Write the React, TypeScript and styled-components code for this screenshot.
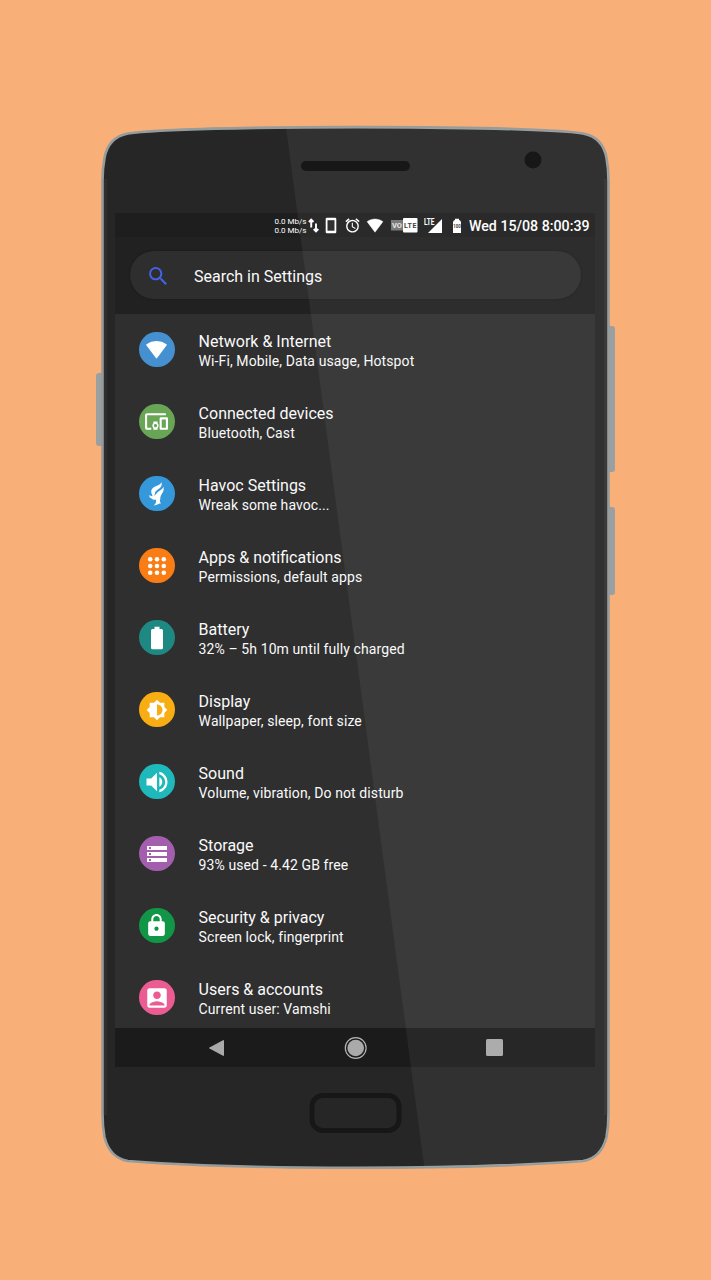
import React from 'react';
import styled, { createGlobalStyle } from 'styled-components';
import {
  MdAccountBox, MdAccessAlarm, MdBrightnessMedium, MdDevicesOther,
  MdLock, MdSearch, MdStorage, MdVolumeUp,
} from 'react-icons/md';

const GlobalStyle = createGlobalStyle`
  * { box-sizing: border-box; }
  body { margin: 0; background: #f8af78; font-family: Roboto, "Liberation Sans", sans-serif; }
`;

const Page = styled.main`
  width: 711px;
  height: 1280px;
  padding: 125px 0 0 96px;
  background: #f8af78;
  overflow: hidden;
`;

const Phone = styled.div`
  position: relative;
  width: 519px;
  height: 1044px;
  padding: 88px 20px 0 19px;
`;

const Shell = styled.svg`
  position: absolute;
  inset: 0;
`;

const Glare = styled.svg`
  position: absolute;
  inset: 0;
  pointer-events: none;
`;

const Screen = styled.div`
  position: relative;
  display: flex;
  flex-direction: column;
  width: 480px;
  height: 854px;
  background: #2f2f2f;
  color: #fafafa;
  overflow: hidden;
`;

const StatusBar = styled.header`
  flex: none;
  display: flex;
  align-items: center;
  height: 24px;
  padding-left: 159.5px;
  background: #1e1e1e;
  color: #fff;
`;

const NetSpeed = styled.div`
  width: 33.5px;
  padding-top: 2px;
  font-size: 8px;
  line-height: 9px;
  white-space: nowrap;
`;

const StatusGlyph = styled.span<{ $w: number; $gap?: number }>`
  display: flex;
  flex: none;
  justify-content: center;
  width: ${(p) => p.$w}px;
  margin-left: ${(p) => p.$gap ?? 0}px;
  padding-top: 1px;
`;

const Clock = styled.span`
  margin-left: 7px;
  padding-top: 2px;
  font-size: 14.2px;
  font-weight: 500;
  white-space: nowrap;
`;

const SearchArea = styled.div`
  flex: none;
  height: 77px;
  padding: 14px 14px 0 15px;
  background: #212121;
`;

const SearchField = styled.div`
  display: flex;
  align-items: center;
  height: 48px;
  padding: 2px 0 0 16px;
  border-radius: 24px;
  background: #2e2e2e;
  box-shadow: 0 0 2px #171717;
  font-size: 16px;
  svg { color: #4262ea; margin-right: 23.5px; }
`;

const List = styled.ul`
  flex: 1;
  min-height: 0;
  margin: 0;
  padding: 0;
  list-style: none;
  overflow: hidden;
`;

const Row = styled.li`
  display: flex;
  align-items: center;
  height: 72px;
  padding: 0 24px 2px;
`;

const Badge = styled.span<{ $color: string }>`
  display: flex;
  align-items: center;
  justify-content: center;
  width: 35.6px;
  height: 35.6px;
  margin: 1px 24px 0 0;
  border-radius: 50%;
  background: ${(p) => p.$color};
  color: #fff;
`;

const RowText = styled.div`
  padding-top: 4px;
`;

const Title = styled.div`
  font-size: 16px;
  line-height: 20px;
`;

const Summary = styled.div`
  margin-top: -1px;
  font-size: 14px;
  line-height: 20px;
  letter-spacing: 0.1px;
`;

const NavBar = styled.nav`
  flex: none;
  display: grid;
  grid-template-columns: repeat(3, 139px);
  justify-content: center;
  align-items: center;
  justify-items: center;
  height: 39px;
  background: #1b1b1b;
`;

const WifiGlyph = ({ width, height, rounded }: { width: number; height: number; rounded?: boolean }) => (
  <svg width={width} height={height} viewBox="0 0 22 19">
    <path
      d="M1 4.6C7 .3 15 .3 21 4.6L11 18Z"
      fill="currentColor"
      stroke="currentColor"
      strokeWidth={rounded ? 1.6 : 0.6}
      strokeLinejoin="round"
    />
  </svg>
);

const FlameGlyph = () => (
  <svg width="36" height="36" viewBox="0 0 36 36" fill="currentColor">
    <path d="M22.800 6C23.600 9.400 22 11.500 19.300 13.300C17 14.900 16 16.200 16 18.200C15.600 19.300 14.800 20.300 13.400 20.600C14.200 18.500 12 17.800 12.400 14.700C13.200 9.300 20.500 10.600 22.800 6Z" />
    <path d="M24.800 10.500C25.500 14.500 24.300 16.500 22.700 18.400C21.200 20.500 21.900 22.800 21 25.500L22.300 27.300C20.500 27.600 18.500 28.800 14.800 29.700C17 28 17.500 26.300 17.200 23.500C15.800 24.500 13.800 23.600 12.600 22.600C11 22.300 10.100 20.800 10.600 18.800C12.200 21.200 15.500 20.500 17.600 17.700C19.800 14.600 23.500 14.200 24.800 10.500Z" />
  </svg>
);

const AppsGlyph = () => (
  <svg width="20" height="20" viewBox="0 0 20 20" fill="currentColor">
    {[3.2, 10, 16.8].map((y) => [3.2, 10, 16.8].map((x) => <circle key={`${x}-${y}`} cx={x} cy={y} r="2.3" />))}
  </svg>
);

const BatteryGlyph = () => (
  <svg width="14" height="24" viewBox="0 0 14 24" fill="currentColor">
    <path d="M4.500 .8H9.500V3H11.500Q13 3 13 4.500V21.700Q13 23.200 11.500 23.200H2.500Q1 23.200 1 21.700V4.500Q1 3 2.500 3H4.500Z" />
  </svg>
);

const items = [
  { title: 'Network & Internet', summary: 'Wi-Fi, Mobile, Data usage, Hotspot', color: '#4590d0', icon: <WifiGlyph width={21} height={19} rounded /> },
  { title: 'Connected devices', summary: 'Bluetooth, Cast', color: '#68a655', icon: <MdDevicesOther size={25} /> },
  { title: 'Havoc Settings', summary: 'Wreak some havoc...', color: '#3498db', icon: <FlameGlyph /> },
  { title: 'Apps & notifications', summary: 'Permissions, default apps', color: '#f97c14', icon: <AppsGlyph /> },
  { title: 'Battery', summary: '32% – 5h 10m until fully charged', color: '#1e8982', icon: <BatteryGlyph /> },
  { title: 'Display', summary: 'Wallpaper, sleep, font size', color: '#f8ad13', icon: <MdBrightnessMedium size={22} /> },
  { title: 'Sound', summary: 'Volume, vibration, Do not disturb', color: '#1fb8bb', icon: <MdVolumeUp size={28} /> },
  { title: 'Storage', summary: '93% used - 4.42 GB free', color: '#a35fae', icon: <MdStorage size={24} /> },
  { title: 'Security & privacy', summary: 'Screen lock, fingerprint', color: '#119648', icon: <MdLock size={25} /> },
  { title: 'Users & accounts', summary: 'Current user: Vamshi', color: '#ea5c92', icon: <MdAccountBox size={26} /> },
];

const BODY =
  'M32 8.500C90 0 429 0 487 8.500C500 11 508 19 510.500 33C512 41 512.500 46 512.500 56V988C512.500 998 512 1004 510.500 1012C507 1026 499 1034 487 1036C370 1045 149 1045 32 1036C20 1034 12 1026 8.500 1012C7 1004 6.500 998 6.500 988V56C6.500 46 7 41 8.500 33C11 19 19 11 32 8.500Z';

export default function App() {
  return (
    <Page>
      <GlobalStyle />
      <Phone>
        <Shell width="519" height="1044" viewBox="0 0 519 1044">
          <rect x="0" y="248" width="10" height="73" rx="3" fill="#99a09f" />
          <rect x="509" y="201" width="10" height="146" rx="3" fill="#99a09f" />
          <rect x="509" y="382" width="10" height="88" rx="3" fill="#99a09f" />
          <path d={BODY} fill="#262626" stroke="#969b9c" strokeWidth="2.6" />
          <path d="M9.500 54V990M509.500 54V990" stroke="#2f2f2f" strokeWidth="3" />
        </Shell>
        <Screen>
          <StatusBar>
            <NetSpeed>
              <div>0.0 Mb/s</div>
              <div>0.0 Mb/s</div>
            </NetSpeed>
            <StatusGlyph $w={11}>
              <svg width="11" height="15" viewBox="0 0 11 15" fill="none" stroke="currentColor" strokeWidth="1.9">
                <path d="M3.200 9.500V2M.9 4L3.200 1.700L5.500 4M8 5.500V13M5.700 11L8 13.300L10.300 11" />
              </svg>
            </StatusGlyph>
            <StatusGlyph $w={17} $gap={3}>
              <svg width="12" height="17" viewBox="0 0 12 17">
                <rect x=".7" y=".7" width="10.600" height="15.600" rx="1.300" fill="#fff" />
                <rect x="2.500" y="3.200" width="7" height="10.500" fill="#252525" />
              </svg>
            </StatusGlyph>
            <StatusGlyph $w={17} $gap={5}><MdAccessAlarm size={17} /></StatusGlyph>
            <StatusGlyph $w={18} $gap={5}><WifiGlyph width={18} height={15} /></StatusGlyph>
            <StatusGlyph $w={27} $gap={7}>
              <svg width="27" height="15" viewBox="0 0 27 15" fontFamily="Roboto, sans-serif" fontWeight="700">
                <rect x="0" y="2" width="12" height="10.500" fill="#737373" />
                <rect x="12" y="0" width="14.500" height="14.500" rx="1" fill="#fff" />
                <text x="1" y="10" fontSize="7.500" fill="#e5e5e5">VO</text>
                <text x="13" y="10" fontSize="7" textLength="12.500" fill="#333">LTE</text>
              </svg>
            </StatusGlyph>
            <StatusGlyph $w={20} $gap={6}>
              <svg width="20" height="16" viewBox="0 0 20 16" fontFamily="Roboto, sans-serif" fontWeight="700">
                <path d="M18 1V15H4Z" fill="#fff" />
                <text x="0" y="6.800" fontSize="8.500" textLength="10.500" lengthAdjust="spacingAndGlyphs" fill="#fff" stroke="#292929" strokeWidth="1" paintOrder="stroke">LTE</text>
              </svg>
            </StatusGlyph>
            <StatusGlyph $w={10} $gap={8}>
              <svg width="10" height="16" viewBox="0 0 10 16" fontFamily="Roboto, sans-serif" fontWeight="700">
                <path d="M3 .8H7V2.300H8L9 4V15H1V4L2 2.300H3Z" fill="#fff" />
                <text x="1.300" y="9.800" fontSize="5.500" textLength="7.400" lengthAdjust="spacingAndGlyphs" fill="#333">100</text>
              </svg>
            </StatusGlyph>
            <Clock>Wed 15/08 8:00:39</Clock>
          </StatusBar>
          <SearchArea>
            <SearchField>
              <MdSearch size={24.5} />
              Search in Settings
            </SearchField>
          </SearchArea>
          <List>
            {items.map((item) => (
              <Row key={item.title}>
                <Badge $color={item.color}>{item.icon}</Badge>
                <RowText>
                  <Title>{item.title}</Title>
                  <Summary>{item.summary}</Summary>
                </RowText>
              </Row>
            ))}
          </List>
          <NavBar>
            <svg width="17" height="18" viewBox="0 0 17 18">
              <path d="M15.500 1.500V16.500L1.500 9Z" fill="#aaa" stroke="#aaa" strokeLinejoin="round" />
            </svg>
            <svg width="25" height="24" viewBox="0 0 25 24">
              <circle cx="12.700" cy="12" r="10.400" fill="none" stroke="#b5b5b5" strokeWidth="1.200" />
              <circle cx="12.700" cy="12" r="8.300" fill="#aaa" />
            </svg>
            <svg width="17" height="17" viewBox="0 0 17 17">
              <rect width="17" height="17" rx="1.500" fill="#a8a8a8" />
            </svg>
          </NavBar>
        </Screen>
        <Glare width="519" height="1044" viewBox="0 0 519 1044">
          <clipPath id="body"><path d={BODY} /></clipPath>
          <path d="M189.700 0L328.500 1044H519V0Z" fill="#fff" fillOpacity=".055" clipPath="url(#body)" />
          <rect x="205" y="36" width="109" height="10" rx="5" fill="#171717" />
          <circle cx="437" cy="35" r="8.500" fill="#171717" />
          <rect x="216" y="970.500" width="87" height="35" rx="11" fill="none" stroke="#171717" strokeWidth="5" />
        </Glare>
      </Phone>
    </Page>
  );
}
